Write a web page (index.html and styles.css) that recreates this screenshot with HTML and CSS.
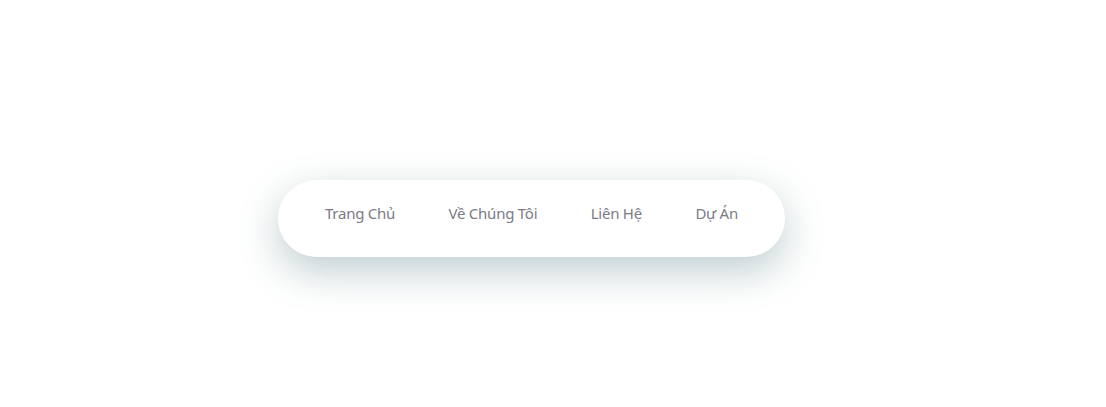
FILE: index.html
```html
<!DOCTYPE html>
<html lang="vi">
<head>
<meta charset="utf-8">
<title>Menu</title>
<link rel="stylesheet" href="styles.css">
</head>
<body>
<main class="stage">
  <nav class="menu">
    <a class="menu-link" href="#">Trang Chủ</a>
    <a class="menu-link" href="#">Về Chúng Tôi</a>
    <a class="menu-link" href="#">Liên Hệ</a>
    <a class="menu-link" href="#">Dự Án</a>
  </nav>
</main>
</body>
</html>
```
FILE: styles.css
```css
html, body {
  margin: 0;
  padding: 0;
  background: #ffffff;
}
.stage {
  box-sizing: border-box;
  height: 407px;
  display: flex;
  align-items: center;
  justify-content: center;
  padding-top: 30px;
  padding-right: 43px;
}
.menu {
  box-sizing: border-box;
  width: 507px;
  height: 77px;
  border-radius: 39px;
  background: #ffffff;
  box-shadow: 0 14px 40px rgba(55, 100, 105, 0.32);
  display: flex;
  align-items: center;
  justify-content: space-between;
  padding: 0 47px 12px 47px;
}
.menu-link {
  font-family: "Noto Sans", "Open Sans", sans-serif;
  font-size: 15px;
  color: #7b7b86;
  text-decoration: none;
  letter-spacing: -0.25px;
}
```
